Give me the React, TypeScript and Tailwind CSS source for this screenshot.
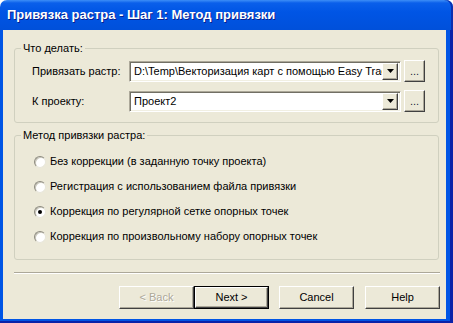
import React from 'react';

const Raised: React.FC<{ className?: string; children?: React.ReactNode }> = ({ className = '', children }) => (
  <div
    className={`flex items-center justify-center bg-[#ECE9D8] border border-t-white border-l-white border-b-[#404040] border-r-[#404040] shadow-[inset_-1px_-1px_#ACA899] ${className}`}
  >
    {children}
  </div>
);

const Combo: React.FC<{ value: string }> = ({ value }) => (
  <div className="flex h-[21px] w-[272px] items-center bg-white border border-t-[#ACA899] border-l-[#ACA899] border-b-white border-r-white shadow-[inset_1px_1px_#716F64,inset_-1px_-1px_#F1EFE2] p-[2px]">
    <div className="flex-1 overflow-hidden whitespace-nowrap pl-[2px] leading-[15px]">{value}</div>
    <Raised className="h-[17px] w-[16px] shrink-0">
      <svg width="7" height="4" viewBox="0 0 7 4">
        <path d="M0 0h7L3.5 4z" fill="#000" />
      </svg>
    </Raised>
  </div>
);

const Ellipsis = () => (
  <Raised className="ml-[3px] h-[22px] w-[21px] items-end pb-[5px] text-[#1a1a3a] leading-[10px]">...</Raised>
);

const GroupBox: React.FC<{ title: string; className?: string; children?: React.ReactNode }> = ({ title, className = '', children }) => (
  <div className={`relative ml-[11px] mr-[7px] border border-[#D0D0BF] rounded-[3px] ${className}`}>
    <span className="absolute -top-[7px] left-[6px] bg-[#ECE9D8] px-[2px] leading-[13px]">{title}</span>
    {children}
  </div>
);

const Radio: React.FC<{ label: string; checked?: boolean }> = ({ label, checked }) => (
  <div className="flex h-[25px] items-center pl-[19px]">
    <div className="flex h-[12px] w-[12px] items-center justify-center rounded-full bg-white border border-t-[#8C8A7E] border-l-[#8C8A7E] border-b-[#E8E6DA] border-r-[#E8E6DA] shadow-[inset_1px_1px_#C9C7BA]">
      {checked && <div className="h-[4px] w-[4px] rounded-full bg-black" />}
    </div>
    <span className="ml-[4px] leading-[13px]">{label}</span>
  </div>
);

const Button: React.FC<{ label: string; disabled?: boolean; isDefault?: boolean; className?: string }> = ({ label, disabled, isDefault, className = '' }) => {
  const inner = (
    <Raised className={`h-full w-full ${disabled ? 'text-[#ACA899] [text-shadow:1px_1px_#fff]' : 'text-black'}`}>
      {label}
    </Raised>
  );
  return (
    <div className={`h-[23px] w-[75px] ${isDefault ? 'border border-black' : ''} ${className}`}>{inner}</div>
  );
};

export default function App() {
  return (
    <div className="w-[453px] h-[323px] flex flex-col overflow-hidden font-['Liberation_Sans',Arial,sans-serif] text-[11px] text-black">
      <div className="h-[30px] shrink-0 flex items-center pl-[7px] rounded-t-[7px] bg-[linear-gradient(to_bottom,#3D8EF7_0px,#0A5FEA_3px,#0055E5_40%,#0050DA_100%)] shadow-[inset_-2px_0_#0A2FB0]">
        <span className="text-white font-bold text-[13px] [text-shadow:1px_1px_#0A1E8C] pb-[1px]">
          Привязка растра - Шаг 1: Метод привязки
        </span>
      </div>
      <div className="flex-1 flex flex-col bg-[#0055E5] pl-[3px] pr-[7px] pb-[4px] shadow-[inset_-3px_-2px_#0A22A8]">
        <div className="flex-1 flex flex-col bg-[#ECE9D8]">
          <GroupBox title="Что делать:" className="mt-[18px] h-[75px] pt-[11px]">
            <div className="flex h-[22px] items-center pl-[17px]">
              <span className="w-[97px]">Привязать растр:</span>
              <Combo value="D:\Temp\Векторизация карт с помощью Easy Trace\карта.tif" />
              <Ellipsis />
            </div>
            <div className="mt-[8px] flex h-[22px] items-center pl-[17px]">
              <span className="w-[97px]">К проекту:</span>
              <Combo value="Проект2" />
              <Ellipsis />
            </div>
          </GroupBox>

          <GroupBox title="Метод привязки растра:" className="mt-[12px] h-[125px] pt-[13px]">
            <Radio label="Без коррекции (в заданную точку проекта)" />
            <Radio label="Регистрация с использованием файла привязки" />
            <Radio label="Коррекция по регулярной сетке опорных точек" checked />
            <Radio label="Коррекция по произвольному набору опорных точек" />
          </GroupBox>

          <div className="mt-[12px] ml-[11px] mr-[6px] border-t border-t-[#ACA899] border-b border-b-white" />

          <div className="mt-[12px] mr-[6px] flex justify-end">
            <Button label="< Back" disabled />
            <Button label="Next >" isDefault />
            <Button label="Cancel" className="ml-[10px]" />
            <Button label="Help" className="ml-[11px]" />
          </div>
        </div>
      </div>
    </div>
  );
}
